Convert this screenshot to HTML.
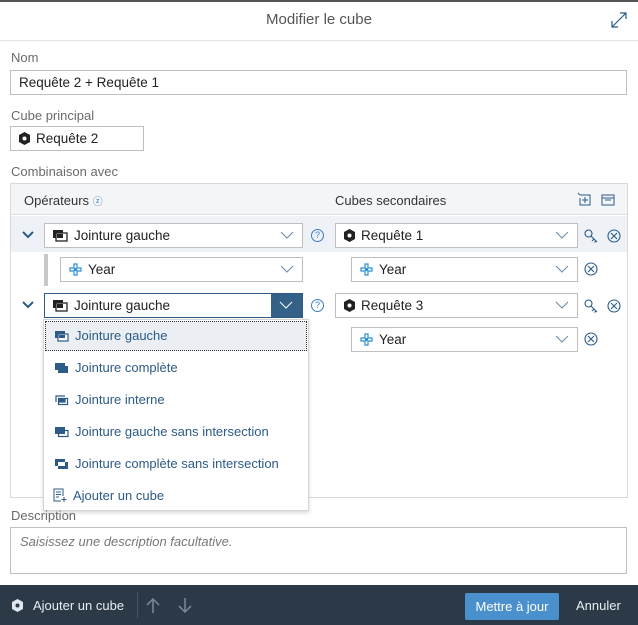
<!DOCTYPE html>
<html><head><meta charset="utf-8"><style>
*{box-sizing:border-box;margin:0;padding:0}
body{width:638px;height:625px;position:relative;background:#fff;font-family:"Liberation Sans",sans-serif;font-size:13px;color:#333;overflow:hidden}
.a{position:absolute}
.lbl{position:absolute;color:#6a6a6a;font-size:13px}
.inp{position:absolute;border:1px solid #bfbfbf;background:#fff;height:25px;line-height:23px;padding-left:8px;font-size:13.5px;color:#222;white-space:nowrap}
.chev{position:absolute;right:8px;top:7px;width:14px;height:9px}
.ic{display:inline-block;vertical-align:-2px;margin-right:6px}
.item{position:absolute;left:1px;right:1px;height:30px;line-height:30px;padding-left:10px;color:#2b5b86;font-size:13px}
</style></head><body>
<div class="a" style="left:0;top:0;width:638px;height:2px;background:#555"></div>
<div class="a" style="left:0;top:40px;width:638px;height:1px;background:#e5e5e5"></div>
<div class="a" style="left:0;top:11px;width:638px;text-align:center;font-size:15px;color:#555">Modifier le cube</div>
<svg class="a" style="left:611px;top:12px" width="16" height="16" viewBox="0 0 16 16" fill="none" stroke="#2b5b86" stroke-width="1.2"><path d="M9 1h6v6M15 1L1 15M1 9v6h6"/></svg>

<div class="lbl" style="left:11px;top:50px">Nom</div>
<div class="inp" style="left:10px;top:70px;width:617px">Requête 2 + Requête 1</div>
<div class="lbl" style="left:11px;top:108px">Cube principal</div>
<div class="inp" style="left:10px;top:126px;width:134px"><svg class="ic" width="11" height="13" viewBox="0 0 11 13"><path d="M5.5 0L11 3v7l-5.5 3L0 10V3z" fill="#222"/><circle cx="5.5" cy="6.5" r="2" fill="#fff"/></svg>Requête 2</div>
<div class="lbl" style="left:11px;top:164px">Combinaison avec</div>

<div class="a" style="left:10px;top:183px;width:618px;height:315px;border:1px solid #d9d9d9"></div>
<div class="a" style="left:11px;top:184px;width:616px;height:31px;background:#f3f5f7;border-bottom:1px solid #e0e0e0"></div>
<div class="a" style="left:24px;top:193px;color:#333">Opérateurs <span style="color:#3a7bbf;font-size:10px">ⓩ</span></div>
<div class="a" style="left:335px;top:193px;color:#333">Cubes secondaires</div>
<svg class="a" style="left:577px;top:192px" width="40" height="14" viewBox="0 0 40 14" fill="none" stroke="#2b5b86" stroke-width="1"><path d="M1 1l2 2M3 3h10v10H3V6M8 5v6M5 8h6M25 3h12v10H25zM25 6h12M28 8h6"/></svg>

<div class="a" style="left:11px;top:216px;width:616px;height:36px;background:#eef2f6"></div>

<svg class="a" style="left:22px;top:231px" width="12" height="8" viewBox="0 0 12 8"><path d="M1 1l5 5 5-5" fill="none" stroke="#2b5b86" stroke-width="2"/></svg>
<svg class="a" style="left:22px;top:301px" width="12" height="8" viewBox="0 0 12 8"><path d="M1 1l5 5 5-5" fill="none" stroke="#2b5b86" stroke-width="2"/></svg>

<div class="inp" style="left:44px;top:223px;width:259px"><svg class="ic" width="15" height="12" viewBox="0 0 15 12"><rect x="0" y="0" width="10" height="8" fill="#222"/><rect x="3" y="3" width="11" height="8" fill="#fff" stroke="#222" stroke-width="1.3"/><rect x="4" y="4" width="6" height="4" fill="#222"/></svg>Jointure gauche<svg class="chev" viewBox="0 0 14 9"><path d="M1 1l6 6 6-6" fill="none" stroke="#6b8aaa" stroke-width="1"/></svg></div>
<div class="a" style="left:311px;top:229px;width:13px;height:13px;border:1px solid #3a7bbf;border-radius:50%;color:#3a7bbf;font-size:9px;text-align:center;line-height:11px">?</div>
<div class="inp" style="left:335px;top:223px;width:243px"><svg class="ic" width="11" height="13" viewBox="0 0 11 13"><path d="M5.5 0L11 3v7l-5.5 3L0 10V3z" fill="#222"/><circle cx="5.5" cy="6.5" r="2" fill="#fff"/></svg>Requête 1<svg class="chev" viewBox="0 0 14 9"><path d="M1 1l6 6 6-6" fill="none" stroke="#6b8aaa" stroke-width="1"/></svg></div>

<div class="a" style="left:44px;top:254px;width:4px;height:32px;background:#c8c8c8"></div>
<div class="inp" style="left:60px;top:257px;width:243px"><svg class="ic" width="13" height="13" viewBox="0 0 13 13" fill="none" stroke="#2a8fd6" stroke-width="1.2"><path d="M5 1h3v4h4v3H8v4H5V8H1V5h4z"/><circle cx="6.5" cy="6.5" r="1" fill="#2a8fd6"/></svg>Year<svg class="chev" viewBox="0 0 14 9"><path d="M1 1l6 6 6-6" fill="none" stroke="#6b8aaa" stroke-width="1"/></svg></div>
<div class="inp" style="left:351px;top:257px;width:227px"><svg class="ic" width="13" height="13" viewBox="0 0 13 13" fill="none" stroke="#2a8fd6" stroke-width="1.2"><path d="M5 1h3v4h4v3H8v4H5V8H1V5h4z"/><circle cx="6.5" cy="6.5" r="1" fill="#2a8fd6"/></svg>Year<svg class="chev" viewBox="0 0 14 9"><path d="M1 1l6 6 6-6" fill="none" stroke="#6b8aaa" stroke-width="1"/></svg></div>

<div class="inp" style="left:44px;top:293px;width:259px;border-color:#2b5b86"><svg class="ic" width="15" height="12" viewBox="0 0 15 12"><rect x="0" y="0" width="10" height="8" fill="#222"/><rect x="3" y="3" width="11" height="8" fill="#fff" stroke="#222" stroke-width="1.3"/><rect x="4" y="4" width="6" height="4" fill="#222"/></svg>Jointure gauche<div class="a" style="right:0;top:0;width:31px;height:23px;background:#346187"><svg class="chev" style="right:9px" viewBox="0 0 14 9"><path d="M1 1l6 6 6-6" fill="none" stroke="#fff" stroke-width="1"/></svg></div></div>
<div class="a" style="left:311px;top:299px;width:13px;height:13px;border:1px solid #3a7bbf;border-radius:50%;color:#3a7bbf;font-size:9px;text-align:center;line-height:11px">?</div>
<div class="inp" style="left:335px;top:293px;width:243px"><svg class="ic" width="11" height="13" viewBox="0 0 11 13"><path d="M5.5 0L11 3v7l-5.5 3L0 10V3z" fill="#222"/><circle cx="5.5" cy="6.5" r="2" fill="#fff"/></svg>Requête 3<svg class="chev" viewBox="0 0 14 9"><path d="M1 1l6 6 6-6" fill="none" stroke="#6b8aaa" stroke-width="1"/></svg></div>
<div class="inp" style="left:351px;top:327px;width:227px"><svg class="ic" width="13" height="13" viewBox="0 0 13 13" fill="none" stroke="#2a8fd6" stroke-width="1.2"><path d="M5 1h3v4h4v3H8v4H5V8H1V5h4z"/><circle cx="6.5" cy="6.5" r="1" fill="#2a8fd6"/></svg>Year<svg class="chev" viewBox="0 0 14 9"><path d="M1 1l6 6 6-6" fill="none" stroke="#6b8aaa" stroke-width="1"/></svg></div>

<svg class="a" style="left:584px;top:229px" width="14" height="14" viewBox="0 0 14 14" fill="none" stroke="#2b5b86" stroke-width="1.1"><circle cx="4.5" cy="4.5" r="3.5"/><path d="M7 7l6 6M10 10l-2 2M12 12l-1.5 1.5"/></svg>
<svg class="a" style="left:607px;top:229px" width="14" height="14" viewBox="0 0 14 14" fill="none" stroke="#2b5b86" stroke-width="1.1"><circle cx="7" cy="7" r="6"/><path d="M4 4l6 6M10 4l-6 6"/></svg>
<svg class="a" style="left:584px;top:262px" width="14" height="14" viewBox="0 0 14 14" fill="none" stroke="#2b5b86" stroke-width="1.1"><circle cx="7" cy="7" r="6"/><path d="M4 4l6 6M10 4l-6 6"/></svg>
<svg class="a" style="left:584px;top:299px" width="14" height="14" viewBox="0 0 14 14" fill="none" stroke="#2b5b86" stroke-width="1.1"><circle cx="4.5" cy="4.5" r="3.5"/><path d="M7 7l6 6M10 10l-2 2M12 12l-1.5 1.5"/></svg>
<svg class="a" style="left:607px;top:299px" width="14" height="14" viewBox="0 0 14 14" fill="none" stroke="#2b5b86" stroke-width="1.1"><circle cx="7" cy="7" r="6"/><path d="M4 4l6 6M10 4l-6 6"/></svg>
<svg class="a" style="left:584px;top:332px" width="14" height="14" viewBox="0 0 14 14" fill="none" stroke="#2b5b86" stroke-width="1.1"><circle cx="7" cy="7" r="6"/><path d="M4 4l6 6M10 4l-6 6"/></svg>

<div class="a" style="left:43px;top:319px;width:266px;height:192px;background:#fff;border:1px solid #d5d5d5;box-shadow:0 2px 4px rgba(0,0,0,.15)">
<div class="item" style="top:1px;background:#ebeff4;border:1px dotted #333;padding-left:9px;line-height:28px"><svg class="ic" width="14" height="11" viewBox="0 0 14 11"><rect x="0" y="0" width="10" height="7" fill="#2b5b86"/><rect x="3" y="3" width="10" height="7" fill="#fff" stroke="#2b5b86" stroke-width="1.2"/><rect x="4" y="4" width="6" height="3" fill="#2b5b86"/></svg>Jointure gauche</div>
<div class="item" style="top:33px"><svg class="ic" width="14" height="11" viewBox="0 0 14 11"><rect x="0" y="0" width="10" height="7" fill="#2b5b86"/><rect x="3" y="3" width="10" height="7" fill="#2b5b86"/></svg>Jointure complète</div>
<div class="item" style="top:65px"><svg class="ic" width="14" height="11" viewBox="0 0 14 11" fill="none" stroke="#2b5b86" stroke-width="1.2"><path d="M1 7V1h9"/><rect x="3.5" y="3.5" width="9" height="6"/><rect x="4" y="4" width="6" height="3" fill="#2b5b86"/></svg>Jointure interne</div>
<div class="item" style="top:97px"><svg class="ic" width="14" height="11" viewBox="0 0 14 11"><rect x="0" y="0" width="10" height="7" fill="#2b5b86"/><path d="M10 3.5h3v6H3.5V7" fill="none" stroke="#2b5b86" stroke-width="1.2"/></svg>Jointure gauche sans intersection</div>
<div class="item" style="top:129px"><svg class="ic" width="14" height="11" viewBox="0 0 14 11"><path d="M0 0h10v3H3v4H0z M10 3h3v7H3V7h7z" fill="#2b5b86"/></svg>Jointure complète sans intersection</div>
<div class="item" style="top:161px;padding-left:8px"><svg class="ic" width="14" height="14" viewBox="0 0 14 14" fill="none" stroke="#2b5b86" stroke-width="1"><path d="M8 13H1V1h9v7M3 4h5M3 6.5h5M3 9h3M11 9v5M8.5 11.5h5"/></svg>Ajouter un cube</div>
</div>

<div class="lbl" style="left:11px;top:508px">Description</div>
<div class="a" style="left:10px;top:527px;width:617px;height:47px;border:1px solid #bfbfbf;padding:6px 9px;color:#777;font-style:italic;font-size:13px">Saisissez une description facultative.</div>

<div class="a" style="left:0;top:585px;width:638px;height:40px;background:#2c3a48"></div>
<svg class="a" style="left:12px;top:599px" width="11" height="13" viewBox="0 0 11 13"><path d="M5.5 0L11 3v7l-5.5 3L0 10V3z" fill="#dfe6ee"/><circle cx="5.5" cy="6.5" r="2" fill="#2c3a48"/></svg>
<div class="a" style="left:33px;top:598px;color:#e8edf2;font-size:13px">Ajouter un cube</div>
<div class="a" style="left:137px;top:592px;width:1px;height:26px;background:#44546a"></div>
<svg class="a" style="left:146px;top:597px" width="14" height="17" viewBox="0 0 14 17" fill="none" stroke="#7a8a9c" stroke-width="1.5"><path d="M7 16V2M1 8l6-6 6 6"/></svg>
<svg class="a" style="left:178px;top:597px" width="14" height="17" viewBox="0 0 14 17" fill="none" stroke="#7a8a9c" stroke-width="1.5"><path d="M7 1v14M1 9l6 6 6-6"/></svg>
<div class="a" style="left:465px;top:593px;width:94px;height:27px;background:#4a90cc;border-radius:2px;color:#fff;text-align:center;line-height:27px;font-size:13px">Mettre à jour</div>
<div class="a" style="left:576px;top:598px;color:#e8edf2;font-size:13px">Annuler</div>
</body></html>
